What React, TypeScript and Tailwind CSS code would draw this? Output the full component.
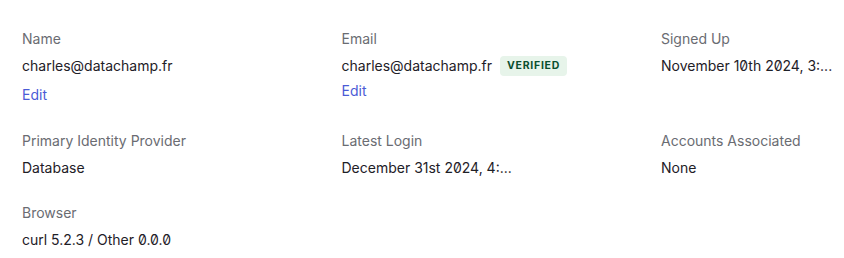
import React from "react";

const Label = ({ children }: { children: React.ReactNode }) => (
  <div className="text-[14px] leading-[20px] text-[#6a6c72]">{children}</div>
);

const Value = ({ children, className = "" }: { children: React.ReactNode; className?: string }) => (
  <div className={`mt-[7px] text-[14px] leading-[20px] text-[#1e2027] ${className}`}>{children}</div>
);

export default function App() {
  return (
    <div
      className="w-[844px] h-[258px] overflow-hidden bg-white pl-[22px] pt-[29px] slashed-zero"
      style={{ fontFamily: "Inter, 'Noto Sans', sans-serif" }}
    >
      <div className="grid grid-cols-[319.5px_319.5px_180px] gap-y-[26px]">
        <div>
          <Label>Name</Label>
          <Value>charles@datachamp.fr</Value>
          <div className="mt-[9px] text-[14px] leading-[20px] text-[#4b5bd6]">Edit</div>
        </div>
        <div>
          <Label>Email</Label>
          <Value className="flex items-center">
            <span>charles@datachamp.fr</span>
            <span className="ml-[8px] inline-flex h-[20px] items-center rounded-[4px] bg-[#e7f4ea] px-[7px] text-[10.5px] font-bold tracking-[0.07em] text-[#0b4f2f]">
              VERIFIED
            </span>
          </Value>
          <div className="mt-[5px] text-[14px] leading-[20px] text-[#4b5bd6]">Edit</div>
        </div>
        <div>
          <Label>Signed Up</Label>
          <Value className="whitespace-nowrap">November 10th 2024, 3:...</Value>
        </div>

        <div>
          <Label>Primary Identity Provider</Label>
          <Value>Database</Value>
        </div>
        <div>
          <Label>Latest Login</Label>
          <Value className="whitespace-nowrap">December 31st 2024, 4:...</Value>
        </div>
        <div>
          <Label>Accounts Associated</Label>
          <Value>None</Value>
        </div>

        <div className="-mt-[1px]">
          <Label>Browser</Label>
          <Value>curl 5.2.3 / Other 0.0.0</Value>
        </div>
      </div>
    </div>
  );
}
